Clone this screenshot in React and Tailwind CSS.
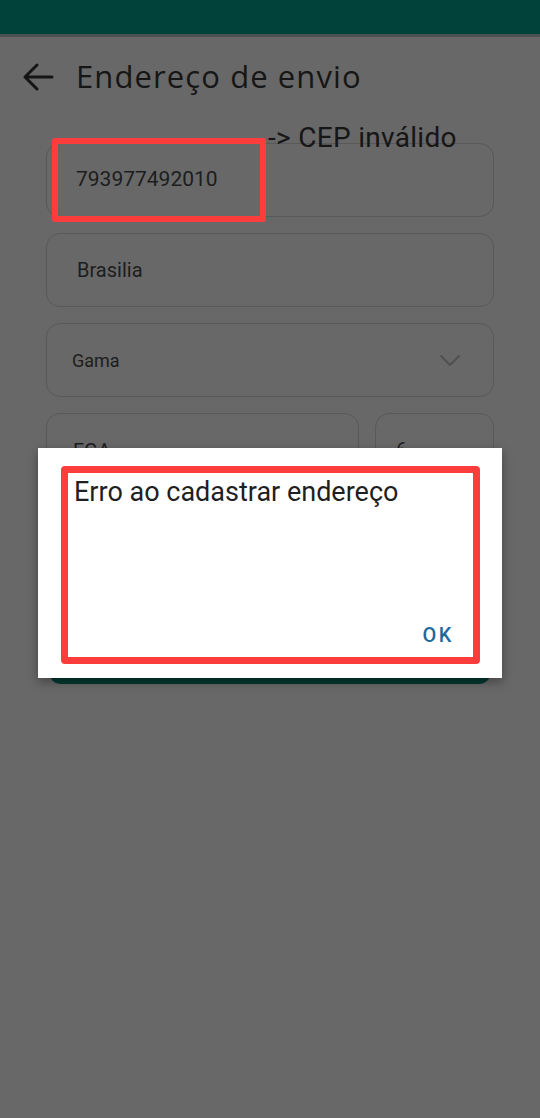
import React from "react";

function Field({ children, className = "" }) {
  return (
    <div className={"h-[74px] rounded-[14px] border-[1.5px] border-[#595959] flex items-center " + className}>
      {children}
    </div>
  );
}

export default function App() {
  return (
    <div className="relative w-[540px] h-[1118px] bg-[#686868] overflow-hidden" style={{ fontFamily: "Roboto, 'Liberation Sans', sans-serif" }}>
      <div className="h-[34px] bg-[#01423a]" />
      <div className="h-[3px] bg-[#4b5251]" />
      <div className="h-[79px] flex items-center pl-[22px]">
        <svg width="32" height="30" viewBox="0 0 32 30" fill="none" stroke="#151515" strokeWidth="3" strokeLinecap="round" strokeLinejoin="round">
          <path d="M30 15H3M15 3L3 15L15 27" />
        </svg>
        <span className="ml-[22px] text-[31px] text-[#161616] tracking-[1.1px]" style={{ fontFamily: "'Open Sans', sans-serif", fontWeight: 400 }}>Endereço de envio</span>
      </div>
      <div className="px-[46px] pt-[27px] flex flex-col gap-[16px]">
        <Field className="pl-[29px]"><span className="text-[21px] text-[#1d1d1d]">793977492010</span></Field>
        <Field className="pl-[30px]"><span className="text-[20px] text-[#1d1d1d]">Brasilia</span></Field>
        <Field className="pl-[25px] pr-[32px] justify-between">
          <span className="text-[18px] text-[#1d1d1d]">Gama</span>
          <svg width="22" height="13" viewBox="0 0 22 13" fill="none" stroke="#505050" strokeWidth="2" strokeLinecap="round" strokeLinejoin="round">
            <path d="M2 2L11 11L20 2" />
          </svg>
        </Field>
        <div className="flex gap-[16px]">
          <Field className="flex-1 pl-[26px] items-end pb-[20px]"><span className="text-[20px] text-[#1d1d1d]">FGA</span></Field>
          <Field className="w-[119px] pl-[20px]"><span className="text-[20px] text-[#1d1d1d]">6</span></Field>
        </div>
        <div className="mt-[125px] mx-[4px] h-[56px] rounded-[10px] bg-[#013a31]" />
      </div>

      {/* annotation: CEP */}
      <div className="absolute left-[52px] top-[138px] w-[214px] h-[84px] border-[6px] border-[#fd3c3c] rounded-[3px]" />
      <div className="absolute left-[268px] top-[119px] text-[28px] tracking-[0.3px] text-[#161616] leading-[38px]">-&gt; CEP inválido</div>

      {/* dialog */}
      <div className="absolute left-[38px] top-[448px] w-[464px] h-[230px] bg-white shadow-[0_4px_10px_rgba(0,0,0,0.35)] pl-[36px] pr-[48px] pt-[26px] pb-[31px] flex flex-col justify-between">
        <div className="text-[27px] text-[#1f1f1f] leading-[36px]">Erro ao cadastrar endereço</div>
        <div className="self-end text-[20px] font-medium tracking-[2.5px] text-[#1d6a9e] leading-[24px]">OK</div>
      </div>
      <div className="absolute left-[61px] top-[466px] w-[419px] h-[198px] border-[7px] border-[#fd3c3c] rounded-[4px]" />
    </div>
  );
}
